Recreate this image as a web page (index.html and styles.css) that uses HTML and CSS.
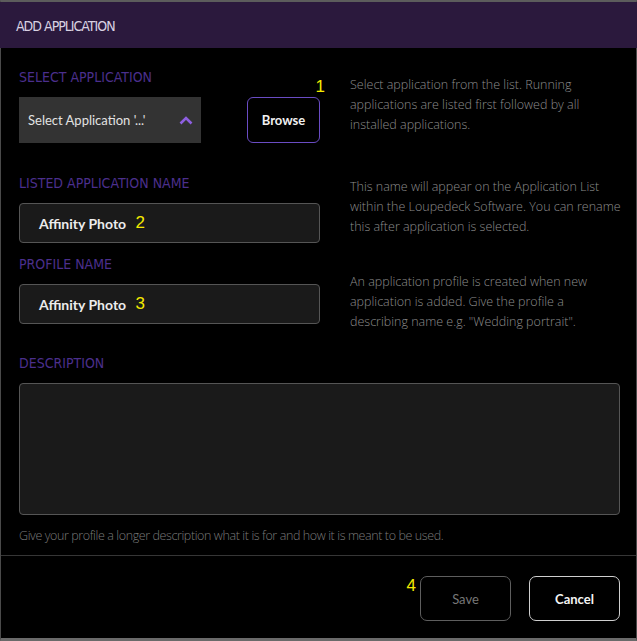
FILE: index.html
```html
<!DOCTYPE html>
<html>
<head>
<meta charset="utf-8">
<link rel="stylesheet" href="styles.css">
</head>
<body>
<div class="window">
  <header class="titlebar">ADD APPLICATION</header>
  <main class="content">
    <section class="row row-1">
      <div class="field">
        <div class="label">SELECT APPLICATION</div>
        <div class="select-line">
          <div class="dropdown">
            <span>Select Application '...'</span>
            <svg class="chev" width="14" height="9" viewBox="0 0 14 9"><path d="M1.5 7.5 L7 2 L12.5 7.5" fill="none" stroke="#8e5fe0" stroke-width="2.6"/></svg>
          </div>
          <button class="browse">Browse<span class="mark mark-1">1</span></button>
        </div>
      </div>
      <p class="hint hint-1">Select application from the list. Running<br>applications are listed first followed by all<br>installed applications.</p>
    </section>
    <section class="row row-2">
      <div class="field">
        <div class="label">LISTED APPLICATION NAME</div>
        <div class="input">Affinity Photo <span class="mark">2</span></div>
      </div>
      <p class="hint hint-2">This name will appear on the Application List<br>within the Loupedeck Software. You can rename<br>this after application is selected.</p>
    </section>
    <section class="row row-3">
      <div class="field">
        <div class="label">PROFILE NAME</div>
        <div class="input">Affinity Photo <span class="mark">3</span></div>
      </div>
      <p class="hint hint-3">An application profile is created when new<br>application is added. Give the profile a<br>describing name e.g. "Wedding portrait".</p>
    </section>
    <section class="desc">
      <div class="label">DESCRIPTION</div>
      <div class="textarea"></div>
      <p class="help">Give your profile a longer description what it is for and how it is meant to be used.</p>
    </section>
  </main>
  <footer class="footer">
    <span class="mark mark-4">4</span>
    <button class="btn btn-save">Save</button>
    <button class="btn btn-cancel">Cancel</button>
  </footer>
</div>
</body>
</html>
```

FILE: styles.css
```css
html, body {
  margin: 0;
  padding: 0;
  background: #000;
}
.window {
  width: 637px;
  height: 641px;
  box-sizing: border-box;
  border-top: 2px solid #5c5c5c;
  border-bottom: 3px solid #6a6a6a;
  border-left: 1px solid #4a4a4a;
  border-right: 1px solid #4a4a4a;
  background: #000;
  display: flex;
  flex-direction: column;
  font-family: Lato, "Open Sans", sans-serif;
}
.titlebar {
  height: 46px;
  box-sizing: border-box;
  flex: none;
  background: #2b193d;
  color: #d8d1e2;
  font-family: "Liberation Sans Narrow", "DejaVu Sans Condensed", Roboto, sans-serif;
  font-size: 14px;
  letter-spacing: -1px;
  line-height: 46px;
  padding: 1px 0 0 16px;
  margin-left: -1px;
  margin-right: -1px;
}
.content {
  padding: 0 16px 0 18px;
  flex: 1;
}
.row {
  display: grid;
  grid-template-columns: 301px 1fr;
  column-gap: 30px;
  align-items: start;
}
.row-1 { margin-top: 21px; }
.row-2 { margin-top: 32px; }
.row-3 { margin-top: 13px; height: 68px; }
.label {
  font-family: "Liberation Sans Narrow", "DejaVu Sans Condensed", Roboto, sans-serif;
  font-size: 14px;
  line-height: 16px;
  color: #4b2f8c;
  height: 16px;
}
.select-line {
  margin-top: 12px;
  display: flex;
  align-items: center;
  gap: 46px;
}
.dropdown {
  width: 182px;
  height: 46px;
  box-sizing: border-box;
  background: #333333;
  display: flex;
  align-items: center;
  justify-content: space-between;
  padding: 0 8px 0 9px;
  color: #e2e2e2;
  font-size: 13px;
}
.browse {
  position: relative;
  width: 73px;
  height: 46px;
  background: #000;
  border: 1px solid #6a4cc4;
  border-radius: 6px;
  color: #f0f0f0;
  font-family: Lato, sans-serif;
  font-size: 13px;
  font-weight: 700;
  padding: 0;
}
.mark {
  color: #f4ea00;
  font-family: "Liberation Sans", sans-serif;
  font-size: 17px;
  font-weight: 400;
  margin-left: 6px;
}
.mark-1 {
  position: absolute;
  right: -6px;
  top: -21px;
}
.input {
  margin-top: 12px;
  height: 40px;
  box-sizing: border-box;
  background: #1a1a1a;
  border: 1px solid #555;
  border-radius: 4px;
  display: flex;
  align-items: center;
  padding-left: 19px;
  color: #ececec;
  font-size: 14px;
  font-weight: 700;
  white-space: pre;
}
.hint {
  margin: 0;
  color: #8c8c8c;
  font-family: "Open Sans", sans-serif;
  font-size: 12.5px;
  line-height: 20px;
  font-weight: 300;
  white-space: nowrap;
}
.hint-1 { padding-top: 6px; }
.hint-2 { padding-top: 2px; }
.hint-3 { padding-top: 16px; }
.desc {
  margin-top: 31px;
}
.textarea {
  margin-top: 12px;
  height: 132px;
  box-sizing: border-box;
  background: #1a1a1a;
  border: 1px solid #555;
  border-radius: 4px;
}
.help {
  margin: 11px 0 0;
  color: #7a7a7a;
  font-family: "Open Sans", sans-serif;
  font-weight: 300;
  font-size: 12.5px;
  letter-spacing: -0.4px;
  line-height: 20px;
}
.footer {
  flex: none;
  height: 83px;
  box-sizing: border-box;
  border-top: 1px solid #363636;
  display: flex;
  align-items: flex-start;
  justify-content: flex-end;
  padding: 20px 16px 0 0;
  gap: 18px;
}
.mark-4 {
  margin: 0 -14px 0 0;
}
.btn {
  width: 91px;
  height: 45px;
  background: #000;
  border-radius: 7px;
  font-family: Lato, sans-serif;
  font-size: 13px;
  padding: 0;
}
.btn-save {
  border: 1px solid #5e5e5e;
  color: #777;
}
.btn-cancel {
  border: 1px solid #cfcfcf;
  color: #f4f4f4;
  font-weight: 700;
}
```
